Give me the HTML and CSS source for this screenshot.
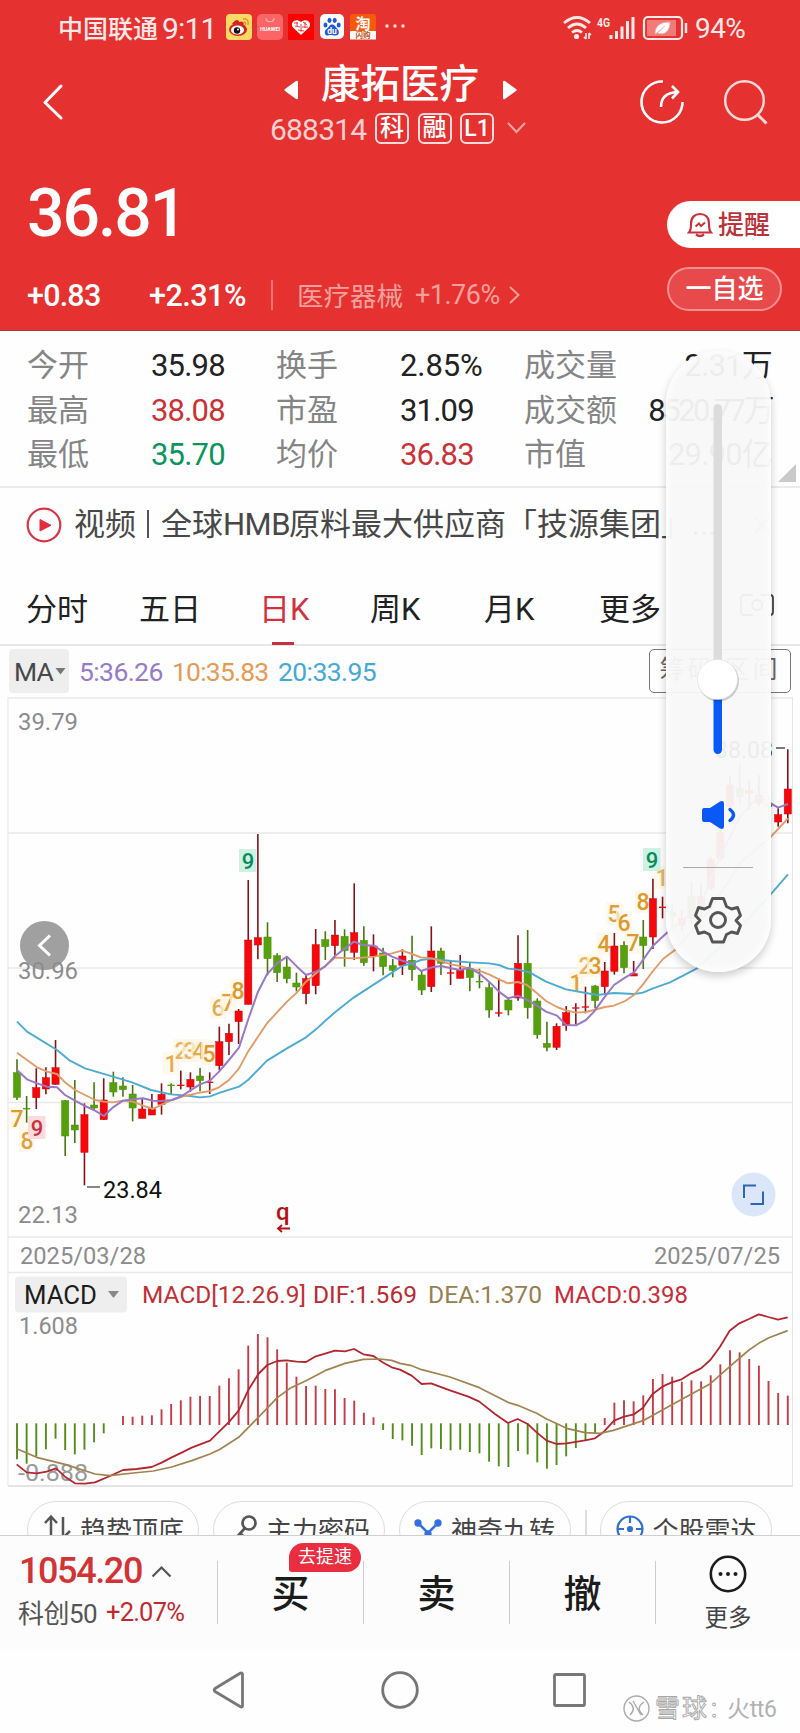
FILE: index.html
```html
<!DOCTYPE html>
<html lang="zh-CN">
<head>
<meta charset="utf-8">
<title>康拓医疗 688314</title>
<link rel="stylesheet" href="styles.css">
</head>
<body>
<div class="phone">
  <header class="header">
    <div class="status">
      <span class="carrier">中国联通</span><span class="clock">9:11</span>
      <div class="apps">
        <svg width="26" height="26" viewBox="0 0 26 26"><rect width="26" height="26" rx="4" fill="#fbd967"/><ellipse cx="12" cy="15.500" rx="9" ry="6.500" fill="#d5231d"/><path d="M6 10c3-5 7-5 7-2 4-1 6 1 4 3" fill="#d5231d"/><ellipse cx="11.500" cy="16" rx="6.500" ry="4.500" fill="#fff"/><circle cx="11" cy="16.500" r="3.200" fill="#111"/><circle cx="12" cy="15.500" r="1" fill="#fff"/><path d="M17 5c4-1 6 2 5 6M17.500 8c2 0 2.500 1 2 3" stroke="#e8952c" stroke-width="1.500" fill="none"/></svg>
        <svg width="26" height="26" viewBox="0 0 26 26"><rect width="26" height="26" rx="5" fill="#fb6565"/><path d="M9 4c0 5 8 5 8 0" stroke="#fdb5b2" fill="none" stroke-width="1.200"/><text x="3" y="17" font-size="5.500" font-weight="700" fill="#fff" textLength="20" lengthAdjust="spacingAndGlyphs">HUAWEI</text></svg>
        <svg width="26" height="26" viewBox="0 0 26 26"><rect width="26" height="26" fill="#fb0200"/><path d="M13 21L4.500 13C2 8 8 4 13 8c5-4 11 0 8.500 5z" fill="#fff"/><path d="M6 9h4M15 8l4 3M7 12l5 1M14 13h6M10 16l6 1M9 8v4M13 10v8M17 8v6" stroke="#e01515" stroke-width=".8"/></svg>
        <svg width="26" height="26" viewBox="0 0 26 26"><rect x="1" width="24" height="25" rx="5" fill="#fff"/><g fill="#2558d5"><ellipse cx="6.500" cy="11" rx="2" ry="2.600"/><ellipse cx="10.500" cy="6.300" rx="2" ry="2.600"/><ellipse cx="15.700" cy="6.300" rx="2" ry="2.600"/><ellipse cx="19.700" cy="11" rx="2" ry="2.600"/><path d="M13 10.500c3 0 3.500 2.500 5.500 4.500s2 6.500-1.500 6.500-5-1-8 0-4.500-4.500-1.500-6.500 2.500-4.500 5.500-4.500z"/></g><text x="13" y="20" font-size="8.500" font-weight="700" text-anchor="middle" fill="#fff">du</text></svg>
        <svg width="26" height="26" viewBox="0 0 26 26"><rect width="26" height="18" rx="3" fill="#f5590c"/><rect y="17" width="26" height="8.500" fill="#fff"/><text x="13" y="14.500" font-size="15" font-weight="700" text-anchor="middle" fill="#fff">淘</text><text x="13" y="24" font-size="7.500" font-weight="700" text-anchor="middle" fill="#b5541a">闪购</text></svg>
      </div>
      <svg class="dots" width="22" height="6" viewBox="0 0 22 6" fill="#ffe4e2"><circle cx="3" cy="3" r="1.700"/><circle cx="11" cy="3" r="1.700"/><circle cx="19" cy="3" r="1.700"/></svg>
      <svg class="sys" width="128" height="28" viewBox="562 13 128 28" fill="none" stroke="#ffe9e8">
        <path d="M565 22q13-11 26 0M569 27q9-8 18 0M573 31.500q5-4 10 0" stroke-width="2.800"/>
        <circle cx="577.500" cy="35.500" r="2.600" fill="#ffe9e8" stroke="none"/>
        <path d="M587 32v6M590 32v6M585 36l2 2M592 34l-2-2" stroke-width="1.600"/>
        <text x="598" y="26" font-size="13" font-weight="700" fill="#ffe9e8" stroke="none" textLength="13" lengthAdjust="spacingAndGlyphs">4G</text>
        <path d="M612 34v4M617.500 30v8M623 25.500v12.500M628.500 20v18M634 16v22" stroke-width="3"/>
        <rect x="645" y="16" width="38" height="22" rx="4" stroke-width="2.200"/><rect x="648" y="19" width="29" height="16" fill="#f27b79" stroke="none"/>
        <path d="M656 33c0-9 6-12 15-12 0 9-5 14-13 11l-2 2 10-9" fill="#fff" stroke="#ef9b99" stroke-width=".7"/>
        <path d="M687 22v10" stroke-width="2.400"/>
      </svg>
      <span class="battery">94%</span>
    </div>

    <div class="titlebar">
      <svg class="back" width="22" height="36" viewBox="0 0 22 36"><path d="M20 2L4 18.500 20 34" fill="none" stroke="#fff" stroke-width="3" stroke-linecap="round" stroke-linejoin="round"/></svg>
      <div class="name">
        <div class="name-main">
          <svg width="16" height="20" viewBox="0 0 16 20" fill="#fff"><path d="M15 2v16q0 2-2 1L2 11q-1.500-1 0-2L13 1q2-1 2 1z"/></svg>
          <h1>康拓医疗</h1>
          <svg width="16" height="20" viewBox="0 0 16 20" fill="#fff"><path d="M1 2v16q0 2 2 1l11-8q1.500-1 0-2L3 1Q1 0 1 2z"/></svg>
        </div>
        <div class="name-sub"><span class="code">688314</span><b>科</b><b>融</b><b class="lv">L1</b>
          <svg width="19" height="12" viewBox="0 0 19 12"><path d="M1 1l8.500 9L18 1" fill="none" stroke="#f7a5a3" stroke-width="2"/></svg>
        </div>
      </div>
      <svg class="share" width="46" height="46" viewBox="0 0 46 46" fill="none" stroke="#fff" stroke-width="2.600"><path d="M24 2.500A20.500 20.500 0 1 0 43.500 23"/><path d="M22 28q0-14 16-15M33 7l6 6-6 6.500"/></svg>
      <svg class="search" width="46" height="46" viewBox="0 0 46 46" fill="none" stroke="#ffdad9" stroke-width="2.500"><circle cx="21.500" cy="21.500" r="19.300"/><path d="M35 36l8.500 8.500" stroke-width="3"/></svg>
    </div>

    <div class="quote">
      <strong class="price">36.81</strong>
      <div class="remind">
        <svg width="26" height="26" viewBox="0 0 26 26" fill="none" stroke="#c8303a" stroke-width="2.200"><path d="M2 20.500q2-2 2-8.500C4 5 8 2 13 2s9 3 9 10q0 6.500 2 8.500zM9 22.500q4 3 8 0"/><path d="M8.500 14.500l3.500-3 2 2.500 4-3.500" stroke-width="2"/></svg>
        <span>提醒</span>
      </div>
    </div>
    <div class="change">
      <span class="diff">+0.83</span><span class="pct">+2.31%</span><i></i>
      <span class="sector">医疗器械</span><span class="sector-pct">+1.76%</span>
      <svg width="11" height="18" viewBox="0 0 11 18"><path d="M1 1l8.500 8L1 17" fill="none" stroke="#f4a09d" stroke-width="1.900"/></svg>
      <button class="fav">一自选</button>
    </div>
  </header>

  <section class="stats">
    <span>今开</span><em>35.98</em><span>换手</span><em class="wide">2.85%</em><span>成交量</span><em class="r">2.31万</em>
    <span>最高</span><em class="up">38.08</em><span>市盈</span><em>31.09</em><span>成交额</span><em class="r long">8520.77万</em>
    <span>最低</span><em class="down">35.70</em><span>均价</span><em class="up">36.83</em><span>市值</span><em class="r">29.90亿</em>
    <svg class="corner" width="18" height="18" viewBox="0 0 18 18"><path d="M18 0v18H0z" fill="#c9c9c9"/></svg>
  </section>

  <section class="news">
    <svg width="36" height="36" viewBox="0 0 36 36"><circle cx="18" cy="18" r="16.300" fill="none" stroke="#d73545" stroke-width="2.200"/><path d="M14 12.500v11.500l11-5.700z" fill="#e32c3d" stroke="#e32c3d" stroke-linejoin="round"/></svg>
    <p>视频<i></i>全球<span>HMB</span>原料最大供应商「技源集团」...</p>
    <svg class="close" width="16" height="18" viewBox="0 0 16 18"><path d="M1 1l14 16M15 1L1 17" stroke="#aaa" stroke-width="1.500"/></svg>
  </section>

  <nav class="tabs">
    <a>分时</a><a>五日</a><a class="on">日K</a><a>周K</a><a>月K</a><a>更多</a>
    <svg width="34" height="22" viewBox="0 0 34 22" fill="none" stroke="#444" stroke-width="1.800"><path d="M13 1H4Q1 1 1 4v14q0 3 3 3h9M21 1h9q3 0 3 3v14q0 3-3 3h-2"/><circle cx="17" cy="11" r="5"/></svg>
  </nav>

  <section class="ma">
    <span class="pick">MA<svg width="11" height="7" viewBox="0 0 10 7"><path d="M0 0h10L5 6.500z" fill="#777"/></svg></span>
    <span class="ma5">5:36.26</span><span class="ma10">10:35.83</span><span class="ma20">20:33.95</span>
    <span class="range">筹码 区间</span>
  </section>

  <svg class="chart" id="chart" width="800" height="790" viewBox="0 697 800 790"></svg>

  <section class="tools">
    <div class="chip c1"><svg width="28" height="28" viewBox="0 0 28 28" fill="none" stroke="#555" stroke-width="2.500"><path d="M8 25V3M2 9l6-6.500L14 9M20 3v21M27 17l-7 7"/></svg>趋势顶底</div>
    <div class="chip c2"><svg width="28" height="28" viewBox="0 0 28 28" fill="none" stroke="#555" stroke-width="2.700"><circle cx="17" cy="9" r="6.500"/><path d="M13 14L3 25M8 19l5 5"/></svg>主力密码</div>
    <div class="chip c3"><svg width="28" height="28" viewBox="0 0 28 28" fill="#3470df" stroke="#3470df" stroke-width="2.500"><path d="M4 9l10 10L24 9" fill="none"/><circle cx="4" cy="9" r="2.400"/><circle cx="14" cy="20" r="2.400"/><circle cx="24" cy="9" r="2.400"/></svg>神奇九转</div>
    <i></i>
    <div class="chip c4"><svg width="28" height="28" viewBox="0 0 28 28" fill="none" stroke="#3470cf" stroke-width="2.200"><circle cx="14" cy="15" r="12.500"/><circle cx="14" cy="15" r="2" fill="#3470cf"/><path d="M14 2v7M14 21v7M1 15h7M20 15h7"/></svg>个股雷达</div>
  </section>

  <footer class="trade">
    <div class="index">
      <div class="idx-val">1054.20<svg width="21" height="13" viewBox="0 0 21 13"><path d="M1.500 11.500l9-9 9 9" fill="none" stroke="#555" stroke-width="2.200"/></svg></div>
      <div class="idx-name"><span>科创50</span><b>+2.07%</b></div>
    </div>
    <div class="act">买<span class="badge">去提速</span></div>
    <div class="act">卖</div>
    <div class="act">撤</div>
    <div class="more"><svg width="38" height="38" viewBox="0 0 38 38"><circle cx="19" cy="19" r="17.200" fill="none" stroke="#1c1c1c" stroke-width="2.600"/><g fill="#1c1c1c"><circle cx="11.500" cy="19" r="2"/><circle cx="19" cy="19" r="2"/><circle cx="26.500" cy="19" r="2"/></g></svg>更多</div>
  </footer>

  <div class="navbar">
    <svg width="800" height="84" viewBox="0 1649 800 84" fill="none" stroke="#777" stroke-width="2.800" stroke-linejoin="round">
      <path d="M242.500 1674v32q-.5 1.500-2 .8L215 1691.500q-1.500-1.500 0-3L240.500 1673q1.500-.5 2 1z"/><circle cx="400" cy="1690" r="17.300"/><rect x="554.500" y="1674.500" width="30" height="31" rx="1.500"/>
      <g stroke="#aaa" stroke-width="1.400"><circle cx="636.500" cy="1708.500" r="12.500"/><path d="M629 1702q8 6 1 13M644 1702q-9 6-1 13M633 1701l8 14"/></g>
      <g fill="#fff" stroke="#a6a6a6" stroke-width=".9" font-size="25"><text x="655" y="1717" textLength="52">雪球</text><text x="711" y="1717">:</text></g><g fill="#b2b2b2" stroke="none" font-size="23"><text x="727" y="1717" textLength="50">火tt6</text></g>
    </svg>
  </div>

  <aside class="volume">
    <svg width="105" height="621" viewBox="666 351 105 621" fill="none">
      <rect x="713.500" y="404" width="8.500" height="290" rx="4.200" fill="#dcdcdc"/>
      <rect x="713.500" y="690" width="8.500" height="64" rx="4.200" fill="#0a59f7"/>
      <circle cx="718.500" cy="681" r="20.500" fill="#000" opacity=".18"/><circle cx="717.500" cy="679.500" r="20" fill="#fff" stroke="#ddd" stroke-width=".6"/>
      <path d="M704 808h6l10-6.500q4-1.500 4 2v23q0 3.500-4 2L710 822h-6q-2 0-2-3v-8q0-3 2-3z" fill="#0a59f7"/>
      <path d="M730 809.500q7 5.500 0 11" stroke="#0a59f7" stroke-width="3.400" stroke-linecap="round"/>
      <path d="M683 867.500h70" stroke="#aaa"/>
      <path d="M712.500 898h11l3 8 5 2.500 6-1.500 3 8-4.500 5 4.500 5-3 8-6-1.500-5 2.500-3 7.500h-11l-3-7.500-5-2.500-6 1.500-3-8 4.500-5-4.500-5 3-8 6 1.500 5-2.500z" transform="translate(0 .5)" stroke="#555" stroke-width="2.900" stroke-linejoin="round"/>
      <circle cx="718" cy="920" r="7.500" stroke="#555" stroke-width="2.900"/>
    </svg>
  </aside>
</div>
<script src="chart.js"></script>
</body>
</html>
```
FILE: styles.css
```css
* { box-sizing: border-box; }
body {
  margin: 0;
  background: #fefefe;
  color: #222;
  font-family: Roboto, "Noto Sans CJK SC", sans-serif;
}
h1, p { margin: 0; font-weight: 400; }
em, i { font-style: normal; }
svg { display: block; flex: none; }
svg text { font-family: Roboto, "Noto Sans CJK SC", sans-serif; }
.phone {
  position: relative;
  width: 800px;
  height: 1733px;
  overflow: hidden;
  display: flex;
  flex-direction: column;
}

/* header */
.header { height: 331px; flex: none; background: #e53231; border-bottom: 1px solid #a83a3c; color: #fff; }
.status { height: 56px; padding-left: 58px; display: flex; align-items: center; color: #ffe9e8; }
.carrier { width: 104px; font-size: 25px; font-weight: 500; white-space: nowrap; padding-bottom: 2px; }
.clock { width: 64px; font-size: 30px; letter-spacing: -.8px; }
.apps { display: flex; gap: 5px; padding-bottom: 2px; }
.dots { margin: 0 0 4px 8px; }
.sys { margin-left: 155px; }
.battery { margin-left: 6px; font-size: 28px; letter-spacing: -.6px; }

.titlebar { height: 96px; display: flex; align-items: flex-start; }
.back { margin: 28px 0 0 41px; }
.name { width: 262px; margin-left: 207px; }
.name-main { display: flex; align-items: center; height: 55px; padding-left: 13px; }
.name-main h1 { font-size: 39.500px; line-height: 56px; font-weight: 500; width: 158px; margin: 3px 23px 0 22px; white-space: nowrap; }
.name-main svg { margin-top: 12px; }
.name-sub { display: flex; align-items: center; height: 34px; }
.code { width: 105px; font-size: 30px; letter-spacing: -.8px; color: #ffd0cf; padding-top: 2px; }
.name-sub b { width: 34px; height: 31px; margin: 0 8.500px 0 0; border: 2px solid #ffdcdb; border-radius: 6px; font-size: 24px; font-weight: 500; line-height: 26px; text-align: center; }
.name-sub b.lv { line-height: 27px; font-size: 23px; }
.name-sub svg { margin-left: 4px; }
.share { margin: 23px 0 0 107px; }
.search { margin: 23px 0 0 38px; }

.quote { height: 97px; display: flex; align-items: flex-start; justify-content: space-between; }
.price { margin: 27px 0 0 27px; font-size: 66px; line-height: 70px; font-weight: 500; letter-spacing: -2px; }
.remind { width: 133px; height: 47px; margin-top: 49px; padding-left: 20px; display: flex; align-items: center; gap: 5px; background: #fff; border-radius: 24px 0 0 24px; color: #b8343a; font-size: 26px; line-height: 30px; font-weight: 500; }
.change { height: 82px; display: flex; align-items: center; padding: 9px 18px 0 27px; white-space: nowrap; }
.diff, .pct { font-size: 30.500px; font-weight: 500; letter-spacing: -.8px; padding-top: 1px; }
.diff { width: 122px; }
.pct { width: 122px; letter-spacing: -.5px; }
.change i { width: 2px; height: 30px; margin-right: 24px; background: #ee7573; }
.sector { width: 118px; font-size: 26.500px; color: #f4a09d; }
.sector-pct { width: 94px; font-size: 27px; letter-spacing: -.5px; color: #f4a09d; }
.fav { width: 115px; height: 44px; margin: -12px 0 0 auto; padding: 0; border: 2px solid #f2918f; border-radius: 22px; background: #e84a4b; color: #fff; font: 500 26px/38px Roboto, "Noto Sans CJK SC", sans-serif; }

/* key figures */
.stats { position: relative; height: 157px; flex: none; padding: 13px 28px 0 27px; display: grid; grid-template-columns: 124px 125px 124px 124px 100px 1fr; grid-auto-rows: 44.500px; align-items: center; border-bottom: 2px solid #ebebeb; font-size: 31px; line-height: 44px; white-space: nowrap; }
.stats span { color: #858585; }
.stats em { letter-spacing: -.8px; color: #222; }
.stats em.wide { letter-spacing: -.1px; }
.stats em.up { color: #c93237; }
.stats em.down { color: #0b945c; }
.stats em.r { justify-self: end; margin-left: -60px; }
.stats em.long { letter-spacing: -2.500px; }
.corner { position: absolute; right: 4px; bottom: 4px; }

/* news */
.news { height: 78px; flex: none; padding: 0 0 5px 26px; display: flex; align-items: center; gap: 12px; color: #484848; }
.news p { font-size: 31px; line-height: 44px; white-space: nowrap; width: 668px; overflow: hidden; }
.news p i { display: inline-block; width: 2px; height: 28px; margin: 0 12px 0 11px; background: #555; vertical-align: -3px; }
.news p span { display: inline-block; width: 66px; font-size: 31px; letter-spacing: -.5px; }

/* period tabs */
.tabs { height: 80px; flex: none; display: grid; grid-template-columns: 113px 120px 111px 114px 115px 141px 1fr; align-items: end; padding-left: 26px; border-bottom: 2px solid #e6e6e6; font-size: 31px; }
.tabs a { position: relative; height: 60px; line-height: 44px; padding-top: 4px; }
.tabs .on { color: #d13140; }
.tabs .on::after { content: ""; position: absolute; left: 13px; bottom: -1px; width: 22px; height: 3px; background: #c92f40; }
.tabs svg { align-self: center; }

/* moving averages */
.ma { height: 51px; flex: none; padding: 3px 9px 0; display: flex; align-items: flex-start; font-size: 26.500px; line-height: 45px; letter-spacing: -.6px; white-space: nowrap; }
.pick { width: 60px; height: 44px; margin-right: 10px; padding-left: 5px; display: flex; align-items: center; gap: 2px; background: #eee; border-radius: 4px; color: #484848; font-size: 26.500px; letter-spacing: -.8px; }
.ma5 { width: 93px; color: #967bc8; }
.ma10 { width: 106px; color: #e59a55; letter-spacing: -.8px; }
.ma20 { color: #45a9d6; letter-spacing: -.6px; }
.range { width: 142px; height: 44px; margin-left: auto; border: 1.500px solid #777; border-radius: 5px; color: #666; font-size: 25px; line-height: 40px; letter-spacing: 3px; text-align: center; }

/* indicator chips */
.tools { height: 48px; flex: none; overflow: hidden; display: flex; align-items: flex-start; padding: 14px 28px 0 27px; }
.chip { width: 172px; height: 58px; flex: none; display: flex; align-items: center; gap: 9px; padding: 0 0 4px 15px; border: 1.500px solid #ddd; border-radius: 29px; font-size: 26px; color: #444; white-space: nowrap; }
.c2 { margin-left: 14px; padding-left: 18px; gap: 6px; }
.c3 { margin-left: 14px; padding-left: 14px; }
.c4 { margin-left: 13px; }
.tools i { width: 1.500px; height: 34px; margin: 9px 0 0 14px; background: #ddd; }

/* trade bar */
.trade { height: 114px; flex: none; display: grid; grid-template-columns: 217px 146px 146px 146px 145px; border-top: 1.500px solid #d0d0d0; background: #fdfcfd; }
.index { padding: 13px 0 0 18px; white-space: nowrap; }
.idx-val { display: flex; align-items: center; gap: 9px; height: 44px; padding-left: 1px; color: #d23436; font-size: 36px; letter-spacing: -1.400px; font-weight: 500; }
.idx-name { display: flex; align-items: center; height: 37px; font-size: 26px; color: #555; }
.idx-name span { width: 88px; letter-spacing: -.5px; }
.idx-name b { font-size: 25.500px; font-weight: 400; letter-spacing: -.8px; color: #c02a2f; }
.act { position: relative; height: 63px; margin-top: 25px; border-left: 1.500px solid #ccc; text-align: center; font-size: 38px; line-height: 66px; font-weight: 500; color: #1c1c1c; }
.badge { position: absolute; left: 71px; top: -18px; width: 72px; height: 29px; border-radius: 15px 15px 15px 3px; background: #ea2d3f; color: #fff; font-size: 18px; line-height: 27px; font-weight: 400; }
.more { height: 63px; margin-top: 25px; border-left: 1.500px solid #ccc; display: flex; flex-direction: column; align-items: center; font-size: 23.500px; line-height: 34px; color: #444; }
.more svg { margin: -6px 0 8px; }

.navbar { height: 84px; flex: none; }

/* volume overlay */
.volume { position: absolute; left: 666px; top: 351px; width: 105px; height: 621px; border-radius: 53px; background: rgba(248, 248, 248, .95); box-shadow: 0 4px 9px rgba(0, 0, 0, .2), inset 0 0 7px 3px rgba(255, 255, 255, .8); }
```
FILE: chart.js
```js
const svg = document.getElementById('chart');
const NS = 'http://www.w3.org/2000/svg';
const STEP = 9.635, X0 = 17;
const px = i => X0 + STEP * i;
const py = v => 820 + v / 3;   // price pane
const my = v => 1220 + v / 3;  // MACD pane

function el(name, attrs, text) {
  const node = document.createElementNS(NS, name);
  for (const key in attrs) node.setAttribute(key, attrs[key]);
  if (text !== undefined) node.textContent = text;
  svg.appendChild(node);
  return node;
}
function rect(x, y, width, height, fill, extra) {
  el('rect', Object.assign({ x, y, width, height, fill }, extra));
}
function line(x1, y1, x2, y2, stroke, w) {
  el('line', { x1, y1, x2, y2, stroke, 'stroke-width': w });
}
function label(x, y, size, fill, text, width) {
  const a = { x, y, fill, 'font-size': size };
  if (width) { a.textLength = width; a.lengthAdjust = 'spacingAndGlyphs'; }
  el('text', a, text);
}
function curve(points, yfn, stroke, w) {
  el('polyline', { points: points.map(p => p[0] + ',' + yfn(p[1])).join(' '), fill: 'none', stroke, 'stroke-width': w, 'stroke-linejoin': 'round' });
}

// frame and grid
[698, 833, 968, 1102.5, 1237, 1272.5].forEach(y => line(8, y, 793, y, '#e9e9e9', 1.7));
line(8, 1486, 793, 1486, '#e4e4e4', 2);
line(8, 697, 8, 1486, '#e5e5e5', 1);
line(792.5, 697, 792.5, 1486, '#e5e5e5', 1);
label(18, 730, 24, '#8c8c8c', '39.79', 60);
label(18, 1223, 24, '#8c8c8c', '22.13', 60);

// countdown marks: x centre, baseline, digit, opacity
[[171, 1072, 1, .8], [181, 1059, 2, .7], [190, 1059, 3, .7], [199, 1059, 4, .8], [209, 1062, 5, 1], [218, 1016, 6, .8], [228, 1011, 7, .9], [238, 999, 8, 1],
 [17, 1127, 7, 1], [27, 1149, 8, .9], [576, 991, 1, .9], [585, 974, 2, .7], [595, 974, 3, 1], [604, 952, 4, 1], [614, 922, 5, .9], [624, 931, 6, 1], [633, 951, 7, 1], [643, 910, 8, 1], [662, 886, 1, .7]
].forEach(([x, y, n, o]) => {
  rect(x - 8, y - 20, 16, 23, '#fff5e5', { opacity: .7 });
  el('text', { x, y, fill: '#dc9a2c', 'font-size': 23, 'font-weight': 500, 'text-anchor': 'middle', opacity: o }, n);
});
[[239, 849, '#cdf1e3', '#078a5c'], [643, 848, '#cdf1e3', '#078a5c'], [28, 1116, '#fbdbe0', '#c8323c']].forEach(([x, y, bg, fg]) => {
  rect(x, y, 17.5, 23, bg);
  el('text', { x: x + 9, y: y + 20, fill: fg, 'font-size': 22, 'font-weight': 500, 'text-anchor': 'middle' }, 9);
});

// candles: high, low, body top, body bottom, rising
const candles = [
  [718,840,758,832,0],[828,908,864,868,0],[745,867,803,833,1],[742,823,773,807,1],[660,795,743,793,1],[840,1008,842,948,0],[780,969,915,930,0],[850,1096,884,997,1],
  [787,870,855,864,0],[775,900,840,899,1],[755,830,788,816,0],[772,830,798,809,0],[795,904,822,864,0],[835,895,867,895,1],[822,885,864,885,1],[790,884,823,853,1],
  [790,824,794,798,0],[752,808,794,798,1],[757,815,778,801,1],[744,814,768,782,0],[757,822,785,789,1],[620,750,665,737,1],[611,705,640,665,1],[567,672,573,605,1],
  [180,553,360,553,1],[42,418,353,375,1],[307,466,351,416,0],[400,486,407,458,0],[410,490,441,476,0],[458,514,489,501,0],[466,553,476,521,1],[327,523,374,497,1],
  [334,420,359,380,0],[300,412,345,377,1],[328,440,349,392,0],[190,420,338,397,1],[319,437,361,428,0],[343,454,378,408,1],[383,466,399,440,0],[417,472,437,451,0],
  [388,465,408,436,1],[347,482,421,449,0],[453,525,465,510,0],[319,516,393,500,1],[383,465,393,430,0],[420,495,457,461,1],[405,475,450,475,1],[427,514,446,473,0],
  [446,505,483,487,0],[487,593,503,570,0],[475,590,577,581,1],[534,586,540,570,0],[346,542,430,534,1],[330,596,430,563,0],[535,656,543,644,0],[605,694,670,682,0],
  [610,690,619,682,1],[558,632,578,616,1],[550,613,562,566,1],[500,580,559,563,1],[495,565,498,542,0],[426,520,453,500,1],[339,464,378,454,1],[364,460,376,443,0],
  [423,468,461,468,1],[300,447,351,377,0],[176,387,236,351,1],[230,295,260,264,1],[250,330,275,290,0],[270,330,295,315,1],[185,310,228,295,0],[190,290,230,270,1],
  [110,210,118,205,1],[30,120,38,115,1],[-130,-30,-105,-40,1],[-170,-50,-95,-70,0],[-120,-30,-90,-80,1],[-135,-40,-75,-50,1],[-75,5,-50,-40,0],[-35,20,-16,6,1],[-212,10,-93,-18,1]
];
candles.forEach(([hi, lo, top, bot, up], i) => {
  const x = px(i);
  line(x, py(hi), x, py(lo), up ? '#851216' : '#47780e', 1.6);
  rect(x - 3.6, py(top), 7.2, Math.max(1.3, (bot - top) / 3), up ? '#f5070b' : '#55a00c', { stroke: up ? '#c4090c' : '#4c9108', 'stroke-width': bot - top > 6 ? .5 : 0 });
});

curve([[17,605],[27,635],[57,690],[70,722],[85,745],[113,770],[132,787],[151,810],[171,823],[190,828],[200,832],[210,829],[220,818],[239,800],[248,780],[267,722],[287,685],[306,652],[316,628],[325,603],[335,577],[354,532],[374,493],[392,458],[402,438],[412,430],[421,420],[432,416],[451,423],[470,427],[489,430],[499,435],[508,446],[518,449],[530,458],[546,485],[566,508],[586,519],[597,525],[614,519],[634,522],[643,518],[653,505],[670,487],[697,445],[735,340],[771,222],[788,163]], py, '#4dabd2', 1.9);
curve([[17,698],[27,720],[37,742],[47,755],[57,762],[65,787],[75,810],[85,825],[95,840],[104,845],[113,847],[123,842],[133,845],[143,857],[153,867],[162,853],[172,840],[182,830],[200,818],[210,813],[219,802],[229,780],[239,745],[248,695],[258,650],[267,610],[277,577],[287,545],[297,517],[306,485],[316,460],[325,438],[335,413],[354,415],[374,410],[392,400],[402,392],[412,402],[421,412],[432,415],[441,423],[451,433],[460,438],[469,445],[479,452],[489,463],[499,478],[508,490],[518,486],[527,495],[537,520],[546,543],[557,561],[566,571],[576,578],[586,576],[594,570],[605,561],[614,557],[625,543],[634,525],[643,493],[653,453],[663,417],[675,390],[710,270],[740,130],[771,50],[788,-5]], py, '#e09b67', 1.9);
curve([[17,750],[27,778],[37,790],[47,800],[57,802],[65,825],[75,842],[85,858],[95,872],[104,888],[113,862],[123,842],[133,838],[143,835],[153,842],[162,843],[172,840],[182,828],[192,808],[200,793],[210,782],[219,755],[229,720],[239,683],[248,600],[258,515],[267,463],[277,430],[287,410],[297,440],[306,465],[316,455],[325,440],[335,408],[345,385],[354,365],[363,375],[374,377],[383,395],[392,410],[402,422],[412,430],[421,453],[432,442],[441,438],[451,445],[460,450],[469,443],[479,460],[489,485],[499,515],[508,535],[518,527],[528,541],[537,557],[546,575],[557,587],[566,615],[576,616],[586,600],[594,575],[605,530],[614,495],[625,473],[634,457],[643,420],[653,377],[668,335],[700,260],[720,110],[740,-10],[758,-70],[771,-50],[778,-37],[788,-48]], py, '#9978c6', 2);

// annotations in the price pane
el('circle', { cx: 44.5, cy: 945.5, r: 24.5, fill: '#8f8f8f', opacity: .85 });
el('path', { d: 'M50 935.5L39.500 945.5 50 955.5', fill: 'none', stroke: '#fff', 'stroke-width': 3 });
label(18, 979, 24, '#8c8c8c', '30.96', 60);
line(87, 1187, 100, 1187, '#444', 1.3);
label(103, 1198, 24.5, '#111', '23.84', 59);
label(715, 758, 24, '#111', '38.08', 58);
line(776, 748, 785, 748, '#333', 1.3);
label(276, 1220, 24, '#b31217', 'q');
svg.lastChild.setAttribute('font-weight', '500');
el('path', { d: 'M290 1228.500H279M282 1225l-4 3.500 4 3.500', fill: 'none', stroke: '#b31217', 'stroke-width': 1.8 });
el('circle', { cx: 753.5, cy: 1194.5, r: 22, fill: '#dbe6f8' });
el('path', { d: 'M744 1198V1185.500H756M763 1191.500V1204H750.500', fill: 'none', stroke: '#2c65b8', 'stroke-width': 2 });

label(20, 1264, 24, '#8c8c8c', '2025/03/28', 126);
label(654, 1264, 24, '#8c8c8c', '2025/07/25', 126);

// MACD pane
rect(15, 1276.5, 112, 36, '#eeeeee', { rx: 4 });
label(24, 1304, 26, '#1c1c1c', 'MACD', 73);
el('path', { d: 'M108 1291h11l-5.500 7z', fill: '#888' });
label(142, 1303, 24.5, '#c13036', 'MACD[12.26.9]', 164);
label(313, 1303, 24.5, '#b92a33', 'DIF:1.569', 104);
label(428, 1303, 24.5, '#968050', 'DEA:1.370', 114);
label(554, 1303, 24.5, '#c92b38', 'MACD:0.398', 134);
label(19, 1334, 24, '#8c8c8c', '1.608', 59);
const bars = [718,731,710,688,656,690,703,689,667,640,613,588,590,587,586,568,552,541,530,528,528,497,475,448,377,342,352,388,428,470,498,497,507,508,534,542,578,592,630,657,661,677,705,685,687,691,689,696,700,725,739,741,693,703,727,746,735,709,684,660,641,594,548,541,544,526,477,462,470,485,481,484,466,433,391,397,417,437,483,519,527];
bars.forEach((v, i) => {
  if (v === 613) return;
  line(px(i), my(v < 613 ? 615 : 610), px(i), my(v), v < 613 ? '#c33c46' : '#528d17', 1.9);
});
label(18, 1481, 24, '#999', '-0.888', 70);
const macdX = p => [p[0] / 3, p[1]];
curve([[50,733],[80,757],[110,760],[140,755],[168,745],[195,770],[225,790],[255,791],[285,787],[330,768],[369,750],[410,747],[455,741],[485,728],[515,712],[545,698],[575,683],[630,662],[688,605],[716,572],[745,510],[775,462],[802,435],[832,423],[860,421],[890,425],[918,426],[945,410],[1005,392],[1035,394],[1062,387],[1090,403],[1120,408],[1150,428],[1175,442],[1200,449],[1235,467],[1265,492],[1293,490],[1350,511],[1405,530],[1438,545],[1485,582],[1524,609],[1553,597],[1583,612],[1610,637],[1640,662],[1670,672],[1700,670],[1755,661],[1785,655],[1812,635],[1842,602],[1872,590],[1902,583],[1929,563],[1957,523],[1987,500],[2015,487],[2045,478],[2073,460],[2103,445],[2131,420],[2160,380],[2189,332],[2218,310],[2247,297],[2276,283],[2305,291],[2334,299],[2363,292]].map(macdX), my, '#b4262f', 1.8);
curve([[50,686],[110,712],[195,733],[285,762],[330,767],[400,759],[460,753],[515,741],[575,722],[630,702],[660,688],[716,652],[775,592],[832,533],[870,505],[918,482],[975,452],[1035,430],[1090,418],[1140,417],[1175,421],[1200,430],[1235,437],[1265,449],[1350,471],[1438,503],[1524,547],[1553,556],[1610,580],[1640,597],[1700,625],[1755,638],[1800,640],[1840,631],[1929,602],[1987,570],[2073,523],[2131,491],[2189,440],[2247,390],[2276,370],[2305,354],[2363,332]].map(macdX), my, '#a08350', 1.7);
```
